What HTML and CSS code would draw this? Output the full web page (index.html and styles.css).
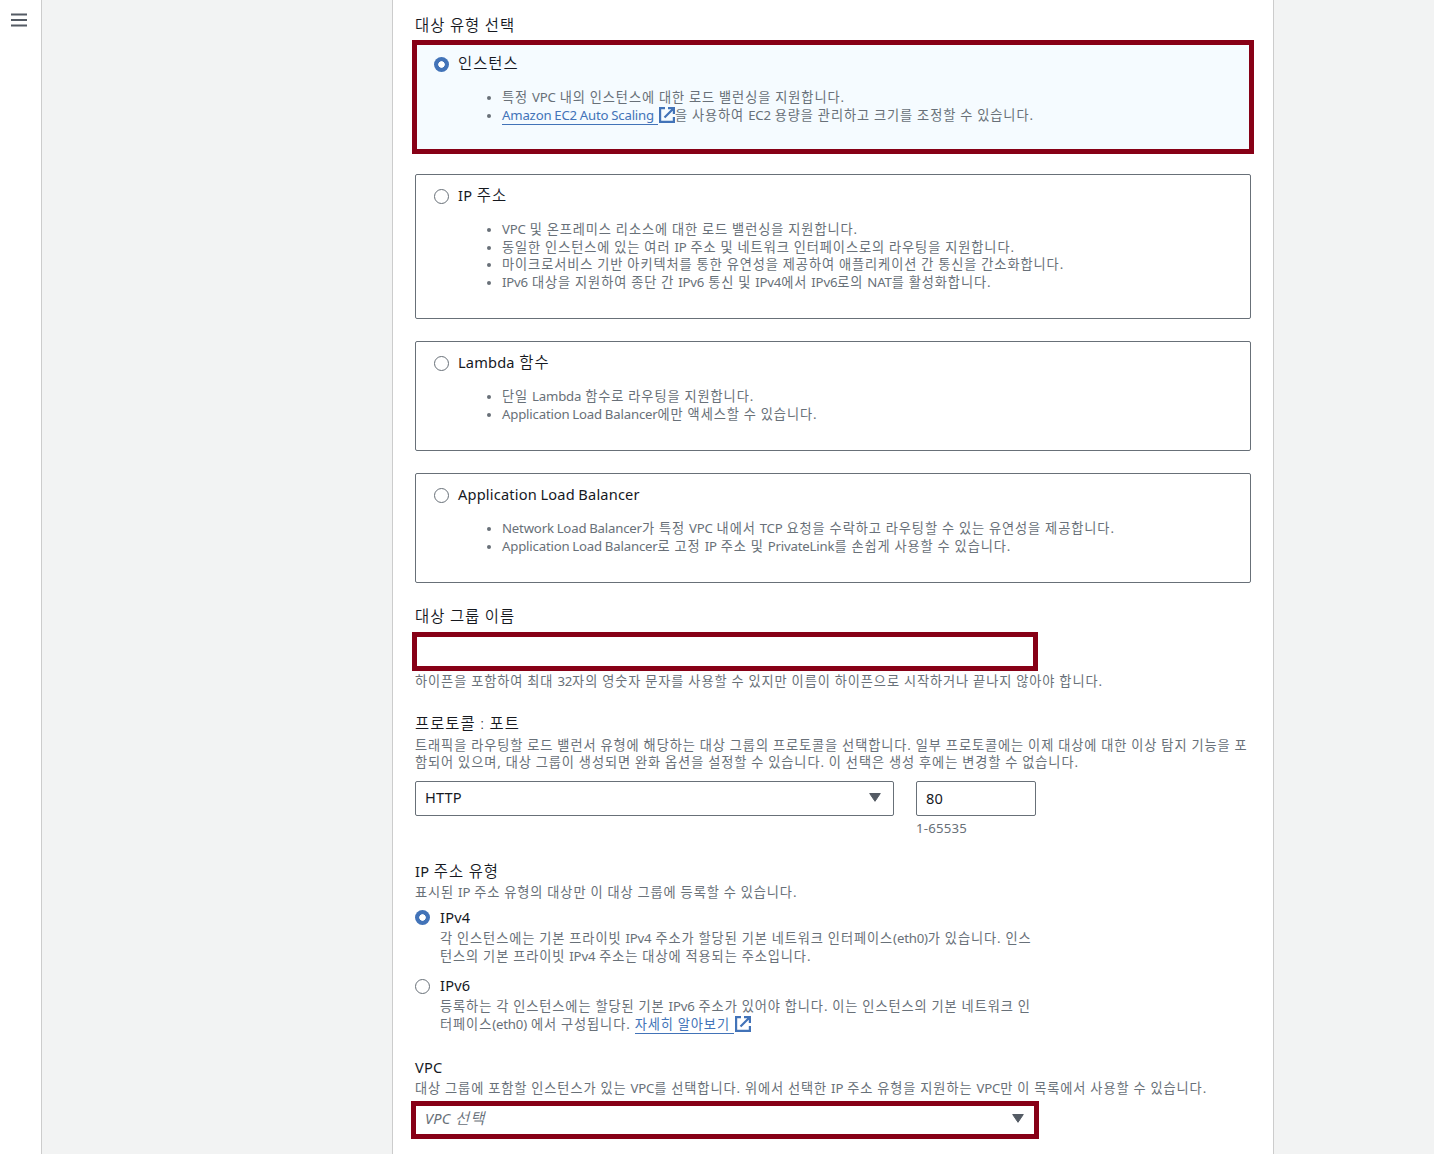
FILE: index.html
```html
<!DOCTYPE html>
<html lang="ko">
<head>
<meta charset="utf-8">
<title>대상 그룹 생성</title>
<link rel="stylesheet" href="styles.css">
</head>
<body>
<svg width="0" height="0" class="defs">
  <symbol id="external" viewBox="0 0 16 16">
    <path d="M6 1.1H1.1v13.8h13.8V10" fill="none" stroke="currentColor" stroke-width="2.2"/>
    <path d="M9 1.1h5.9V7M14.5 1.5L5.5 10.5" fill="none" stroke="currentColor" stroke-width="2.2"/>
  </symbol>
  <symbol id="caret" viewBox="0 0 12 9"><path d="M.7.5h10.6L6 8.3z" fill="#545b64" stroke="#545b64" stroke-linejoin="round"/></symbol>
</svg>
<div class="app">
  <nav class="rail">
    <svg class="menu" width="16" height="14" viewBox="0 0 16 14"><path d="M0 1.5h16M0 7h16M0 12.5h16" stroke="#545b64" stroke-width="2.2"/></svg>
  </nav>
  <main class="panel">
    <h3 class="label">대상 유형 선택</h3>
    <div class="cards">
      <section class="card selected marked">
        <div class="choice"><i class="radio on"></i><span class="title">인스턴스</span></div>
        <ul>
          <li>특정 <span class="en">VPC</span> 내의 인스턴스에 대한 로드 밸런싱을 지원합니다.</li>
          <li><a><span class="en">Amazon EC2 Auto Scaling</span> </a><svg class="ext"><use href="#external"/></svg>을 사용하여 <span class="en">EC2</span> 용량을 관리하고 크기를 조정할 수 있습니다.</li>
        </ul>
      </section>
      <section class="card">
        <div class="choice"><i class="radio"></i><span class="title"><span class="en">IP</span> 주소</span></div>
        <ul>
          <li><span class="en">VPC</span> 및 온프레미스 리소스에 대한 로드 밸런싱을 지원합니다.</li>
          <li>동일한 인스턴스에 있는 여러 <span class="en">IP</span> 주소 및 네트워크 인터페이스로의 라우팅을 지원합니다.</li>
          <li>마이크로서비스 기반 아키텍처를 통한 유연성을 제공하여 애플리케이션 간 통신을 간소화합니다.</li>
          <li><span class="en">IPv6</span> 대상을 지원하여 종단 간 <span class="en">IPv6</span> 통신 및 <span class="en">IPv4</span>에서 <span class="en">IPv6</span>로의 <span class="en">NAT</span>를 활성화합니다.</li>
        </ul>
      </section>
      <section class="card">
        <div class="choice"><i class="radio"></i><span class="title"><span class="en">Lambda</span> 함수</span></div>
        <ul>
          <li>단일 <span class="en">Lambda</span> 함수로 라우팅을 지원합니다.</li>
          <li><span class="en">Application Load Balancer</span>에만 액세스할 수 있습니다.</li>
        </ul>
      </section>
      <section class="card">
        <div class="choice"><i class="radio"></i><span class="title"><span class="en">Application Load Balancer</span></span></div>
        <ul>
          <li><span class="en">Network Load Balancer</span>가 특정 <span class="en">VPC</span> 내에서 <span class="en">TCP</span> 요청을 수락하고 라우팅할 수 있는 유연성을 제공합니다.</li>
          <li><span class="en">Application Load Balancer</span>로 고정 <span class="en">IP</span> 주소 및 <span class="en">PrivateLink</span>를 손쉽게 사용할 수 있습니다.</li>
        </ul>
      </section>
    </div>

    <section class="field name">
      <h3 class="label">대상 그룹 이름</h3>
      <div class="control wide marked"></div>
      <p class="hint">하이픈을 포함하여 최대 <span class="en">32</span>자의 영숫자 문자를 사용할 수 있지만 이름이 하이픈으로 시작하거나 끝나지 않아야 합니다.</p>
    </section>

    <section class="field protocol">
      <h3 class="label">프로토콜 : 포트</h3>
      <p class="hint">트래픽을 라우팅할 로드 밸런서 유형에 해당하는 대상 그룹의 프로토콜을 선택합니다. 일부 프로토콜에는 이제 대상에 대한 이상 탐지 기능을 포<br>함되어 있으며, 대상 그룹이 생성되면 완화 옵션을 설정할 수 있습니다. 이 선택은 생성 후에는 변경할 수 없습니다.</p>
      <div class="pair">
        <div class="control"><span class="en value">HTTP</span><svg class="caret"><use href="#caret"/></svg></div>
        <div>
          <div class="control"><span class="en">80</span></div>
          <p class="hint"><span class="num">1-65535</span></p>
        </div>
      </div>
    </section>

    <section class="field iptype">
      <h3 class="label"><span class="en">IP</span> 주소 유형</h3>
      <p class="hint">표시된 <span class="en">IP</span> 주소 유형의 대상만 이 대상 그룹에 등록할 수 있습니다.</p>
      <div class="option">
        <i class="radio on"></i>
        <div>
          <div class="title"><span class="en">IPv4</span></div>
          <p class="hint">각 인스턴스에는 기본 프라이빗 <span class="en">IPv4</span> 주소가 할당된 기본 네트워크 인터페이스<span class="en">(eth0)</span>가 있습니다. 인스<br>턴스의 기본 프라이빗 <span class="en">IPv4</span> 주소는 대상에 적용되는 주소입니다.</p>
        </div>
      </div>
      <div class="option">
        <i class="radio"></i>
        <div>
          <div class="title"><span class="en">IPv6</span></div>
          <p class="hint">등록하는 각 인스턴스에는 할당된 기본 <span class="en">IPv6</span> 주소가 있어야 합니다. 이는 인스턴스의 기본 네트워크 인<br>터페이스<span class="en">(eth0)</span> 에서 구성됩니다. <a>자세히 알아보기 </a><svg class="ext"><use href="#external"/></svg></p>
        </div>
      </div>
    </section>

    <section class="field vpc">
      <h3 class="label"><span class="en">VPC</span></h3>
      <p class="hint">대상 그룹에 포함할 인스턴스가 있는 <span class="en">VPC</span>를 선택합니다. 위에서 선택한 <span class="en">IP</span> 주소 유형을 지원하는 <span class="en">VPC</span>만 이 목록에서 사용할 수 있습니다.</p>
      <div class="control wide marked placeholder"><span class="value"><span class="en">VPC</span> 선택</span><svg class="caret"><use href="#caret"/></svg></div>
    </section>
  </main>
</div>
</body>
</html>
```
FILE: styles.css
```css
* { box-sizing: border-box; }
body {
  margin: 0;
  background: #f2f3f3;
  color: #16191f;
  font-family: "Noto Sans", "Noto Sans CJK KR", sans-serif;
  font-size: 15.4px;
  line-height: 22px;
  letter-spacing: 1px;
  word-spacing: -.4px;
  overflow: hidden;
}
.defs { position: absolute; }
.app { display: flex; height: 1154px; overflow: hidden; }
.rail {
  width: 42px;
  flex: none;
  background: #fff;
  border-right: 1px solid #ccc;
  padding: 13px 0 0 11px;
}
.menu { display: block; }
.panel {
  width: 882px;
  height: 1160px;
  flex: none;
  margin-left: 350px;
  padding: 15px 22px 0;
  background: #fff;
  border: solid #ccc;
  border-width: 0 1px;
  white-space: nowrap;
}
.en { font-size: 14.6px; letter-spacing: .18px; }
.label { margin: 0; height: 22px; font-size: inherit; font-weight: 350; }
.title { height: 22px; font-weight: 350; }
.label .en, .title .en { font-weight: 400; }
.label:has(.en), .title:has(.en) { line-height: 20px; }
.cards { display: grid; gap: 22px; margin-top: 5px; }
.card { border: 1px solid #687078; border-radius: 2px; padding: 10px 18px 26.6px; }
.selected { background: #f5fbff; }
.choice { display: flex; gap: 9px; align-items: flex-start; }
.radio {
  flex: none;
  width: 15px;
  height: 15px;
  margin-top: 4px;
  border: 1px solid #687078;
  border-radius: 50%;
  background: #fff;
}
.radio.on { border: 0; background: radial-gradient(circle, #fff 2.9px, #4273b8 3.6px); }
.card ul { list-style: none; margin: 14.4px 0 0; padding: 0 0 0 68px; }
.card li, .hint { font-size: 13.2px; line-height: 17.6px; color: #687078; letter-spacing: .92px; }
.card li { height: 17.5px; }
.card li .en, .hint .en { font-size: 13.2px; letter-spacing: -.18px; }
.hint .num { letter-spacing: .2px; }
.card li::before {
  content: "";
  display: inline-block;
  width: 4px;
  height: 4px;
  margin: 0 11px 2px -15px;
  border-radius: 50%;
  background: #687078;
}
.hint { margin: 0; }
a { color: #4273b8; border-bottom: 1px solid #4273b8; white-space: pre; }
.ext { width: 16px; height: 16px; margin-left: 1px; vertical-align: -3px; color: #4273b8; }
.marked { position: relative; }
.marked::after {
  content: "";
  position: absolute;
  inset: -3px -4px;
  border: 5px solid #870016;
}
.control {
  display: flex;
  align-items: center;
  justify-content: space-between;
  height: 35px;
  padding: 0 12px 0 9px;
  border: 1px solid #687078;
  border-radius: 2px;
}
.value { padding-bottom: 2px; }
.wide { width: 621px; }
.caret { width: 12px; height: 9px; margin-bottom: 1px; }
.name { margin-top: 23px; }
.name .control { margin-top: 6px; }
.name .control::after { inset: -3px -3px -3px -4px; }
.name .hint { margin-top: 4px; }
.protocol { margin-top: 22px; }
.protocol .label + .hint { margin-top: 2px; }
.pair { display: grid; grid-template-columns: 479px 120px; gap: 22px; margin-top: 9px; }
.pair .hint { margin-top: 4px; }
.iptype { margin-top: 24px; }
.iptype .label + .hint { margin-top: 1px; }
.option { display: flex; gap: 10px; margin-top: 6px; }
.option + .option { margin-top: 11px; }
.option .radio { margin-top: 2px; }
.option + .option .radio { margin-top: 3px; }
.option .title:has(.en) { line-height: 19px; }
.vpc { margin-top: 25px; }
.vpc .label:has(.en) { line-height: 19px; }
.placeholder { margin-top: 5px; color: #687078; font-style: italic; font-weight: 350; }
.placeholder .value { padding-bottom: 4px; }
.placeholder .caret { margin: 0 -1px 3px 0; }
.placeholder .en { font-weight: 400; }
.placeholder::after { inset: -3px -4px -2px -5px; }
```
